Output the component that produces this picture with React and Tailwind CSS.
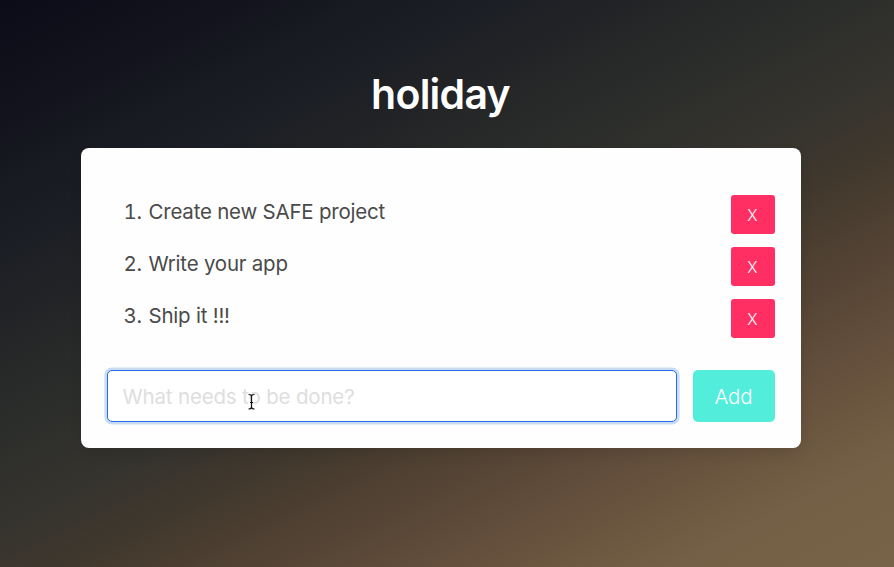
const todos = ["Create new SAFE project", "Write your app", "Ship it !!!"];

function TodoItem({ number, text }) {
  return (
    <li className="flex h-[39.2px] items-start justify-between">
      <span className="flex pt-px text-[20.5px] leading-8 tracking-[-0.22px] text-[#4a4a4a]">
        <span className="mr-[7px] w-[18px] whitespace-nowrap text-right tabular-nums">{number}.</span>
        <span>{text}</span>
      </span>
      <button className="h-[39px] w-11 rounded-[3px] bg-[#ff2e63] text-[15.5px] font-light text-white">
        <span className="relative top-px">X</span>
      </button>
    </li>
  );
}

function TextCursor() {
  return (
    <svg
      className="pointer-events-none absolute left-[140px] top-[22px]"
      width="9"
      height="19"
      viewBox="0 0 9 19"
      fill="none"
      stroke="#111"
      strokeWidth="1.2"
    >
      <path d="M1.5 2.5Q4.5 2.5 4.5 4.5Q4.5 2.5 7.5 2.5M4.5 4V15M1.5 17Q4.5 17 4.5 15Q4.5 17 7.5 17M3 10.5H6" />
    </svg>
  );
}

export default function App() {
  return (
    <main className="flex h-[567px] w-full flex-col items-center overflow-hidden bg-[linear-gradient(153deg,#0c0c19_0%,#13131d_12%,#171a21_18%,#1b1e24_24%,#222326_31%,#292c2a_40%,#32312d_48%,#38352e_54%,#41382d_59%,#4b3e31_64%,#564535_70%,#614d3b_76%,#6a553f_82%,#746046_89%,#776347_100%)] pr-[13px] font-['Inter','Liberation_Sans',sans-serif]">
      <h1 className="mt-[69px] text-[41px] font-semibold leading-[50px] tracking-[-0.75px] text-white">holiday</h1>
      <section className="mt-[29px] flex h-[300px] w-[720px] flex-col rounded-lg bg-[#fefefe] px-[26px] pt-[47px] shadow-[0_6px_16px_-3px_rgba(10,10,10,0.12)]">
        <ol className="flex flex-col gap-[13px] pl-[17px]">
          {todos.map((text, i) => (
            <TodoItem key={text} number={i + 1} text={text} />
          ))}
        </ol>
        <form className="mt-[31.4px] flex gap-4">
          <div className="relative flex-1">
            <input
              className="block h-[52px] w-full rounded-[5px] border border-[#1f70e0] bg-white px-[15px] pt-0.5 text-[20.5px] tracking-[-0.17px] text-[#363636] shadow-[0_0_0_2.6px_rgba(50,115,220,0.25)] outline-none placeholder:text-[#dedede]"
              placeholder="What needs to be done?"
            />
            <TextCursor />
          </div>
          <button type="button" className="h-[52px] w-[82px] rounded-[5px] bg-[#53eddb] pt-0.5 text-[20.5px] font-light tracking-[-0.1px] text-white">
            Add
          </button>
        </form>
      </section>
    </main>
  );
}
